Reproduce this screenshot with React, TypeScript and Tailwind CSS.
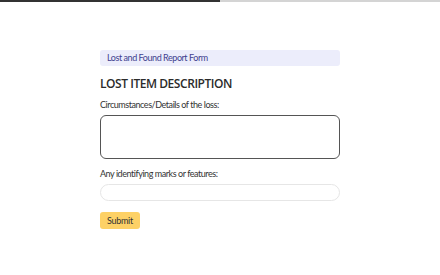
export default function App() {
  return (
    <div className="h-[275px] w-[440px] bg-white font-['Lato',sans-serif]">
      <div className="flex h-[2px] w-full bg-[#d4d4d4]">
        <div className="h-full w-1/2 bg-[#333333]" />
      </div>
      <div className="mx-auto w-[240px] pt-[48px]">
        <div className="flex h-[16px] items-center rounded-[3px] bg-[#ecedfb] px-[7px] text-[9px] tracking-[-0.45px] text-[#3f3f8f]">
          Lost and Found Report Form
        </div>
        <h1 className="mt-[9px] font-['Open_Sans',sans-serif] text-[12px] font-semibold leading-[18px] tracking-[-0.45px] text-[#2b2b2b]">
          LOST ITEM DESCRIPTION
        </h1>
        <label className="mt-[6px] block text-[9px] leading-[12px] tracking-[-0.45px] text-[#333]">
          Circumstances/Details of the loss:
        </label>
        <textarea className="mt-[4px] block h-[44px] w-full resize-none rounded-[6px] border-[1.5px] border-[#555] bg-white" />
        <label className="mt-[9px] block text-[9px] leading-[12px] tracking-[-0.45px] text-[#333]">
          Any identifying marks or features:
        </label>
        <input
          type="text"
          className="mt-[4px] block h-[17px] w-full rounded-full border border-[#e6e6e6] bg-white"
        />
        <button
          type="button"
          className="mt-[11px] h-[17px] rounded-[3px] bg-[#fdd166] px-[7px] text-[9px] tracking-[-0.3px] text-[#333]"
        >
          Submit
        </button>
      </div>
    </div>
  );
}
